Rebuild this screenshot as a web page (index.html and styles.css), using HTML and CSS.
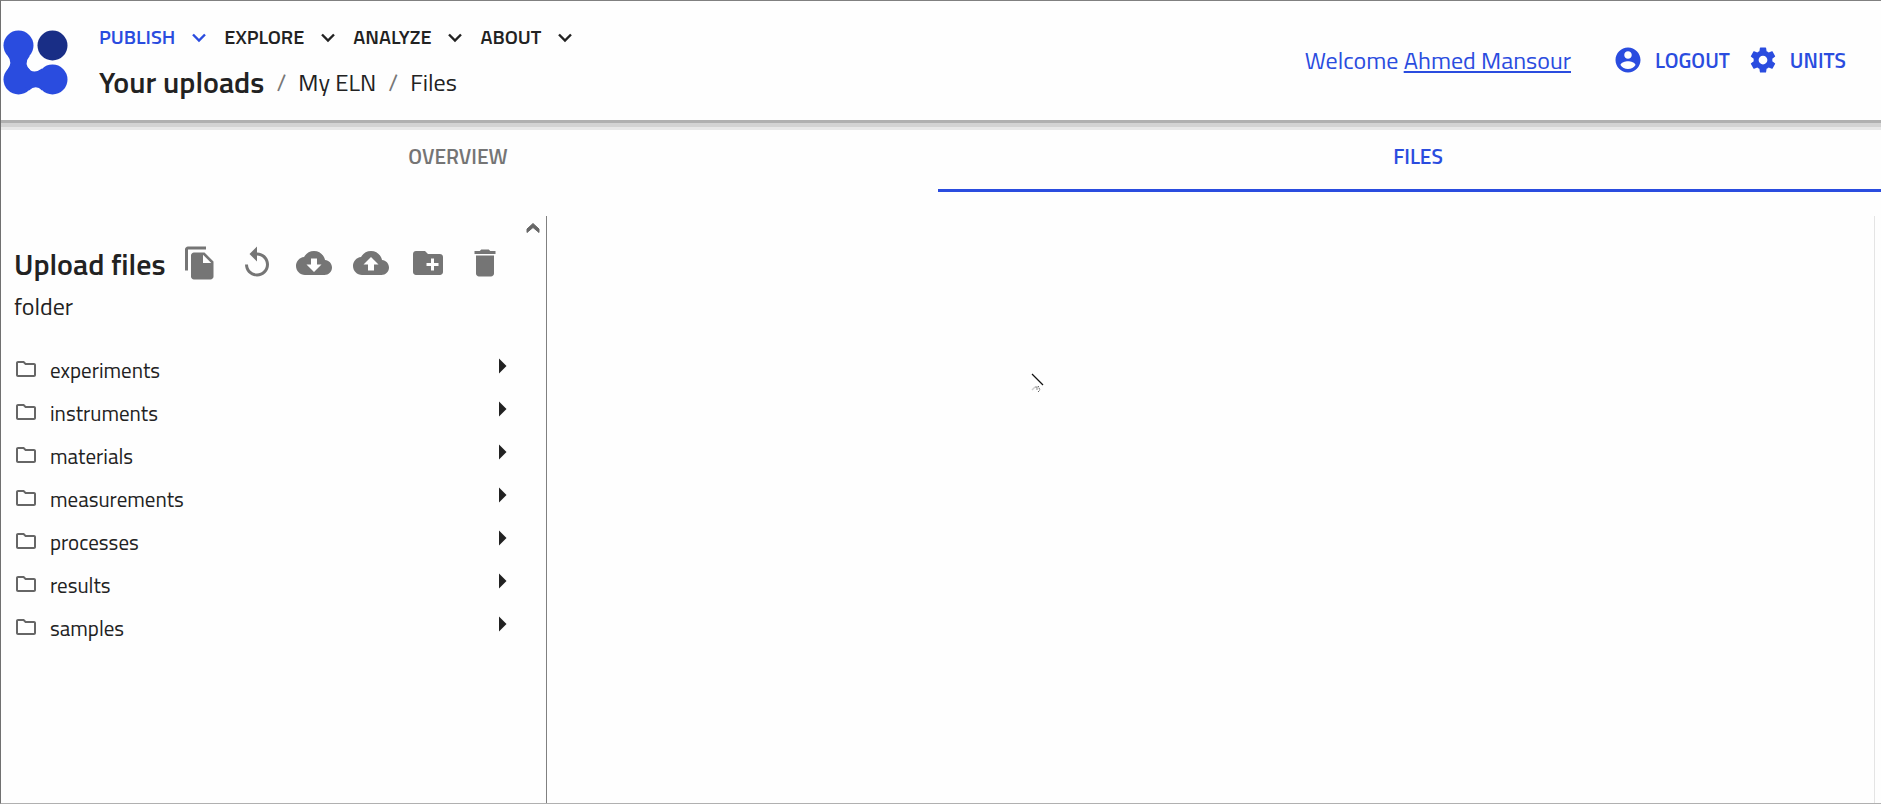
FILE: index.html
```html
<!DOCTYPE html>
<html lang="en">
<head>
<meta charset="utf-8">
<title>Your uploads / My ELN / Files</title>
<link rel="stylesheet" href="styles.css">
</head>
<body>
<svg class="sprite" aria-hidden="true">
  <symbol id="chevron" viewBox="0 0 24 24"><path d="M6 9.5l6 6 6-6" fill="none" stroke="currentColor" stroke-width="2.4"/></symbol>
  <symbol id="folder" viewBox="0 0 24 24"><path d="M9.17 6l2 2H20v10H4V6h5.17M10 4H4c-1.1 0-1.99.9-1.99 2L2 18c0 1.1.9 2 2 2h16c1.1 0 2-.9 2-2V8c0-1.1-.9-2-2-2h-8l-2-2z"/></symbol>
  <symbol id="arrow" viewBox="0 0 24 24"><path d="M10 17l5-5-5-5v10z"/></symbol>
</svg>
<div class="page">
  <header class="header">
    <a class="logo" href="#" aria-label="Home">
      <svg viewBox="0 0 66 66" width="66" height="66">
        <circle cx="50.5" cy="15.5" r="15" fill="#192e86"/>
        <g fill="#2a4cdf">
          <circle cx="16.5" cy="15.5" r="15"/>
          <circle cx="16.5" cy="49.5" r="15"/>
          <circle cx="50.5" cy="49.5" r="15"/>
          <path d="M5.500 25.500Q11 32.500 5.500 39.500L16.500 50l10.500 10.500Q34 54 40 60.500V38.500Q34 43 28.500 40.500Q21 34 28 25.500z"/>
        </g>
      </svg>
    </a>
    <div class="titles">
      <nav class="menu" aria-label="Main">
        <button class="menu-item active" type="button">PUBLISH<svg><use href="#chevron"/></svg></button>
        <button class="menu-item" type="button">EXPLORE<svg><use href="#chevron"/></svg></button>
        <button class="menu-item" type="button">ANALYZE<svg><use href="#chevron"/></svg></button>
        <button class="menu-item" type="button">ABOUT<svg><use href="#chevron"/></svg></button>
      </nav>
      <nav class="crumbs" aria-label="Breadcrumb">
        <a class="crumb-root" href="#">Your uploads</a>
        <span class="slash">/</span>
        <a href="#">My ELN</a>
        <span class="slash">/</span>
        <span>Files</span>
      </nav>
    </div>
    <div class="account">
      <p class="welcome">Welcome <a href="#">Ahmed Mansour</a></p>
      <button class="action" type="button"><svg viewBox="0 0 24 24"><path d="M12 2C6.480 2 2 6.480 2 12s4.480 10 10 10 10-4.480 10-10S17.520 2 12 2zm0 3c1.660 0 3 1.340 3 3s-1.340 3-3 3-3-1.340-3-3 1.340-3 3-3zm0 14.200c-2.500 0-4.710-1.280-6-3.220.03-1.990 4-3.080 6-3.080 1.990 0 5.970 1.090 6 3.080-1.290 1.940-3.500 3.220-6 3.220z"/></svg>LOGOUT</button>
      <button class="action" type="button"><svg viewBox="0 0 24 24"><path d="M19.430 12.980c.04-.32.07-.64.07-.98s-.03-.66-.07-.98l2.110-1.650c.19-.15.24-.42.12-.64l-2-3.460c-.12-.22-.39-.3-.61-.22l-2.490 1c-.52-.4-1.080-.73-1.690-.98l-.38-2.650C14.460 2.180 14.250 2 14 2h-4c-.25 0-.46.18-.49.42l-.38 2.650c-.61.25-1.170.59-1.690.98l-2.490-1c-.23-.09-.49 0-.61.22l-2 3.460c-.13.22-.07.49.12.64l2.110 1.650c-.04.32-.07.65-.07.98s.03.66.07.98l-2.110 1.650c-.19.15-.24.42-.12.64l2 3.460c.12.22.39.3.61.22l2.490-1c.52.4 1.080.73 1.690.98l.38 2.650c.03.24.24.42.49.42h4c.25 0 .46-.18.49-.42l.38-2.650c.61-.25 1.170-.59 1.690-.98l2.490 1c.23.09.49 0 .61-.22l2-3.460c.12-.22.07-.49-.12-.64l-2.110-1.650zM12 15.500c-1.930 0-3.500-1.570-3.500-3.500s1.570-3.500 3.500-3.500 3.500 1.570 3.500 3.500-1.570 3.500-3.500 3.500z"/></svg>UNITS</button>
    </div>
  </header>
  <div class="tabs" role="tablist">
    <button class="tab" type="button" role="tab" aria-selected="false">OVERVIEW</button>
    <button class="tab selected" type="button" role="tab" aria-selected="true">FILES</button>
  </div>
  <main class="browser">
    <section class="lane">
      <button class="collapse" type="button" aria-label="Collapse"><svg viewBox="0 0 14 12"><path d="M1 10.500V7L7 1.500 13 7v3.500L7 5.500z" fill="#666" stroke="#666"/></svg></button>
      <div class="lane-head">
        <h1>Upload files</h1>
        <div class="tools">
          <button type="button" aria-label="Copy path"><svg viewBox="0 0 24 24"><path d="M16 1H4c-1.100 0-2 .9-2 2v14h2V3h12V1zm-1 4l6 6v10c0 1.100-.9 2-1.990 2H7.990C6.890 23 6 22.100 6 21V7c0-1.100.89-2 1.990-2h7zm-1 7h5.500L14 6.500V12z"/></svg></button>
          <button type="button" aria-label="Reload"><svg viewBox="0 0 24 24"><path d="M12 5V1L7 6l5 5V7c3.310 0 6 2.690 6 6s-2.690 6-6 6-6-2.690-6-6H4c0 4.420 3.580 8 8 8s8-3.580 8-8-3.580-8-8-8z"/></svg></button>
          <button type="button" aria-label="Download"><svg viewBox="0 0 24 24"><path d="M19.350 10.040C18.670 6.590 15.640 4 12 4 9.110 4 6.600 5.640 5.350 8.040 2.340 8.360 0 10.910 0 14c0 3.310 2.690 6 6 6h13c2.760 0 5-2.240 5-5 0-2.640-2.050-4.780-4.650-4.960zM17 13l-5 5-5-5h3V9h4v4h3z"/></svg></button>
          <button type="button" aria-label="Upload"><svg viewBox="0 0 24 24"><path d="M19.350 10.040C18.670 6.590 15.640 4 12 4 9.110 4 6.600 5.640 5.350 8.040 2.340 8.360 0 10.910 0 14c0 3.310 2.690 6 6 6h13c2.760 0 5-2.240 5-5 0-2.640-2.050-4.780-4.650-4.960zM14 13v4h-4v-4H7l5-5 5 5h-3z"/></svg></button>
          <button type="button" aria-label="New folder"><svg viewBox="0 0 24 24"><path d="M20 6h-8l-2-2H4c-1.110 0-1.990.89-1.990 2L2 18c0 1.110.89 2 2 2h16c1.110 0 2-.89 2-2V8c0-1.110-.89-2-2-2zm-1 8h-3v3h-2v-3h-3v-2h3V9h2v3h3v2z"/></svg></button>
          <button type="button" aria-label="Delete"><svg viewBox="0 0 24 24"><path d="M6 19c0 1.100.9 2 2 2h8c1.100 0 2-.9 2-2V7H6v12zM19 4h-3.500l-1-1h-5l-1 1H5v2h14V4z"/></svg></button>
        </div>
      </div>
      <p class="kind">folder</p>
      <ul class="folders">
        <li><a href="#"><svg class="ico"><use href="#folder"/></svg><span>experiments</span><svg class="open"><use href="#arrow"/></svg></a></li>
        <li><a href="#"><svg class="ico"><use href="#folder"/></svg><span>instruments</span><svg class="open"><use href="#arrow"/></svg></a></li>
        <li><a href="#"><svg class="ico"><use href="#folder"/></svg><span>materials</span><svg class="open"><use href="#arrow"/></svg></a></li>
        <li><a href="#"><svg class="ico"><use href="#folder"/></svg><span>measurements</span><svg class="open"><use href="#arrow"/></svg></a></li>
        <li><a href="#"><svg class="ico"><use href="#folder"/></svg><span>processes</span><svg class="open"><use href="#arrow"/></svg></a></li>
        <li><a href="#"><svg class="ico"><use href="#folder"/></svg><span>results</span><svg class="open"><use href="#arrow"/></svg></a></li>
        <li><a href="#"><svg class="ico"><use href="#folder"/></svg><span>samples</span><svg class="open"><use href="#arrow"/></svg></a></li>
      </ul>
    </section>
    <section class="canvas">
      <svg class="pointer" viewBox="0 0 14 20" width="14" height="20" aria-hidden="true">
        <path d="M1 1l11 11" stroke="#111" stroke-width="1.200"/>
        <path d="M1 17l3-3" stroke="#ccc" stroke-width="1.500"/>
        <path d="M4 14h2v3" stroke="#888" fill="none"/>
        <path d="M7 13l2 4-2 2" stroke="#222" fill="none" stroke-dasharray="1 1"/>
      </svg>
    </section>
  </main>
</div>
</body>
</html>
```

FILE: styles.css
```css
* { box-sizing: border-box; }

body {
  margin: 0;
  background: #fefefe;
  color: #222;
  font-family: "Titillium Web", Roboto, "Liberation Sans", sans-serif;
  font-size: 21px;
}

button {
  padding: 0;
  border: 0;
  background: none;
  color: inherit;
  font: inherit;
  cursor: pointer;
}

a { color: inherit; text-decoration: none; }
p, h1, ul { margin: 0; padding: 0; }
svg { display: block; flex: none; fill: currentColor; }
.sprite { position: absolute; width: 0; height: 0; }

.page {
  display: flex;
  flex-direction: column;
  min-height: 100vh;
  border: 1px solid #b0b0b0;
  border-top-color: #808080;
  border-left-color: #707070;
  border-right: 0;
  overflow: hidden;
}

.header {
  display: flex;
  align-items: center;
  height: 129px;
  padding: 0 35px 12px 1px;
  background: linear-gradient(to top, #e8e8e8 3px, #d3d3d3 3px 7px, #b0b0b0 7px 10px, transparent 10px);
}

.logo { margin: 6px 31px 0 0; }

.titles { display: flex; flex-direction: column; gap: 13px; }

.menu { display: flex; gap: 13px; }
.menu-item {
  display: flex;
  align-items: center;
  gap: 12px;
  font-size: 20px;
  font-weight: 600;
  line-height: 32px;
}
.menu-item svg { width: 24px; height: 24px; }
.menu-item.active { color: #2a4cdf; }

.crumbs { display: flex; align-items: center; gap: 12px; font-size: 24px; line-height: 32px; }
.crumb-root { font-size: 30px; font-weight: 600; }
.slash { color: #777; }

.account {
  display: flex;
  align-items: center;
  gap: 18px;
  margin-left: auto;
  color: #2a4cdf;
}
.welcome { margin-right: 24px; font-size: 24px; }
.welcome a { text-decoration: underline; }
.action {
  display: flex;
  align-items: center;
  gap: 12px;
  font-weight: 600;
}
.action svg { width: 30px; height: 30px; }

.tabs { display: flex; margin: 0 -17px 0 -23px; }
.tab {
  flex: 1;
  height: 62px;
  padding-bottom: 7px;
  border-bottom: 3px solid transparent;
  color: #757575;
  font-weight: 600;
}
.tab.selected { border-color: #2a4cdf; color: #2a4cdf; }

.browser { display: flex; flex: 1; padding: 24px 6px 0 0; }

.lane {
  display: flex;
  flex-direction: column;
  width: 546px;
  padding: 6px 6px 0 13px;
  border-right: 1px solid #808080;
}
.collapse { align-self: flex-end; }
.collapse svg { width: 14px; height: 12px; }

.lane-head { display: flex; align-items: center; justify-content: space-between; padding: 10px 37px 0 0; }
h1 { padding-top: 2px; font-size: 30px; font-weight: 600; line-height: 36px; }
.tools { display: flex; gap: 21px; color: #757575; }
.tools svg { width: 36px; height: 36px; }

.kind { margin-top: 6px; font-size: 24px; line-height: 36px; }

.folders { margin-top: 23px; list-style: none; }
.folders a {
  display: flex;
  align-items: center;
  height: 43px;
  padding-right: 20px;
}
.folders span { flex: 1; margin-left: 12px; padding-top: 2px; }
.ico { width: 24px; height: 24px; color: #666; }
.open { width: 36px; height: 36px; margin-bottom: 6px; }

.canvas { position: relative; flex: 1; border-right: 1px solid #e4e4e4; }
.pointer { position: absolute; left: 484px; top: 157px; }
```
